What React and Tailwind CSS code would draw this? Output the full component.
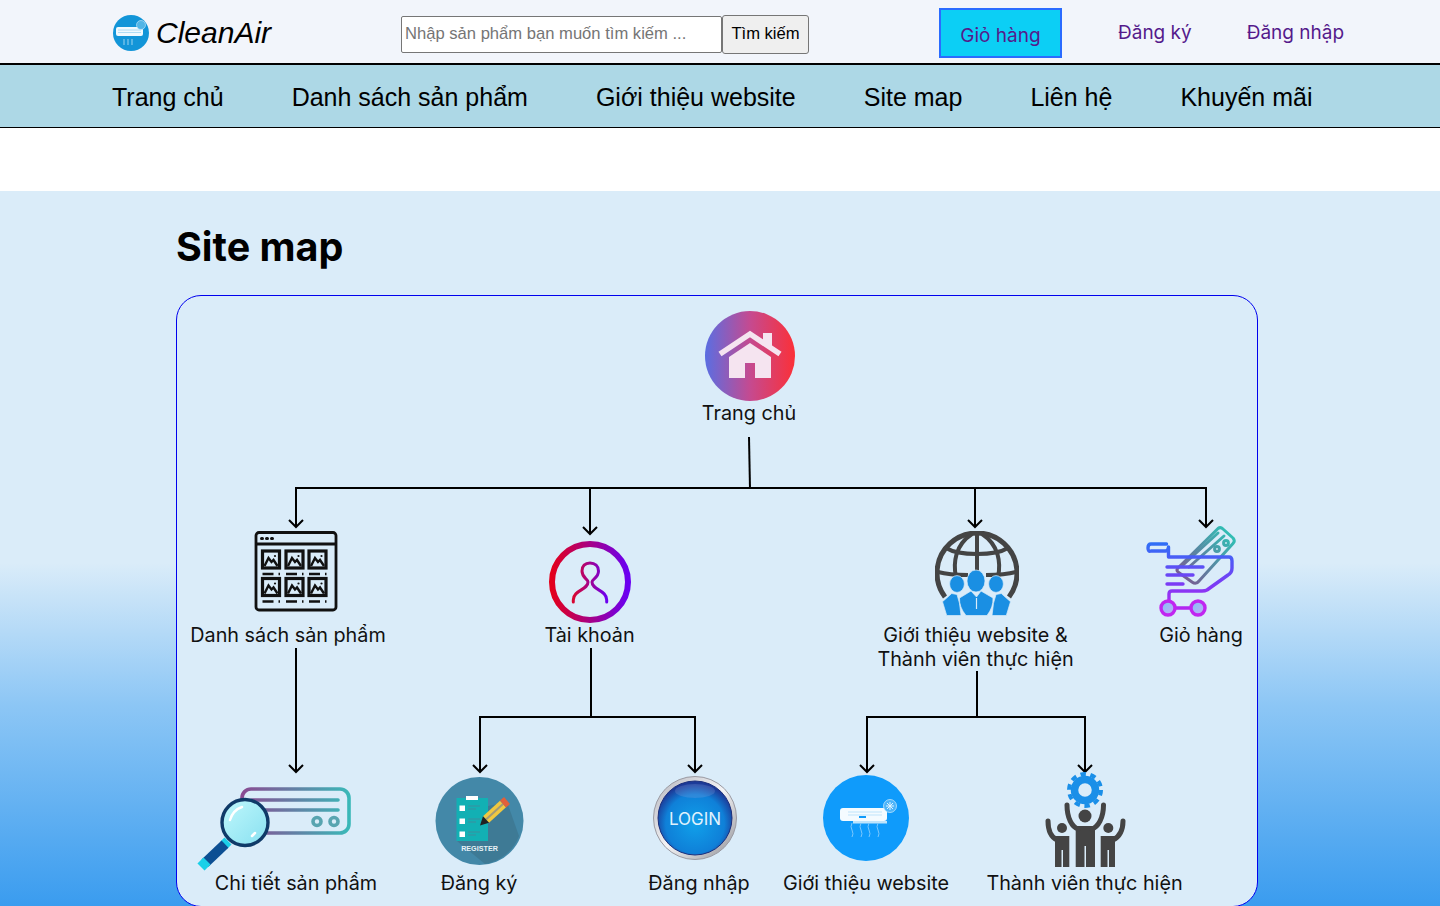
import React from 'react';

const inter = 'font-["Inter","Liberation_Sans",sans-serif]';

function Arrow({ x, y }) {
  return <path d={`M${x - 7} ${y - 7} L${x} ${y} L${x + 7} ${y - 7}`} />;
}

function Connectors() {
  return (
    <svg viewBox="176 295 1082 611" width="1082" height="611" className="absolute left-[-1px] top-[-1px]" fill="none" stroke="#000" strokeWidth="2">
      <path d="M749 437 L750 489" />
      <path d="M296 526 V488 H1206 V526" />
      <path d="M590 488 V533" />
      <path d="M975 488 V526" />
      <Arrow x={296} y={527} />
      <Arrow x={590} y={534} />
      <Arrow x={975} y={527} />
      <Arrow x={1206} y={527} />
      <path d="M296 648 V771" />
      <Arrow x={296} y={772} />
      <path d="M591 648 V717" />
      <path d="M480 771 V717 H695 V771" />
      <Arrow x={480} y={772} />
      <Arrow x={695} y={772} />
      <path d="M977 671 V717" />
      <path d="M867 771 V717 H1085 V771" />
      <Arrow x={867} y={772} />
      <Arrow x={1085} y={772} />
    </svg>
  );
}

function HomeIcon() {
  return (
    <svg width="90" height="90" viewBox="0 0 90 90">
      <defs>
        <linearGradient id="homeG" x1="0" x2="1" y1="0" y2="0">
          <stop offset="0" stopColor="#5a6ee2" />
          <stop offset="0.5" stopColor="#c54a90" />
          <stop offset="1" stopColor="#fb3038" />
        </linearGradient>
      </defs>
      <circle cx="45" cy="45" r="45" fill="url(#homeG)" />
      <path d="M58 22 H67 V36 L58 30 Z" fill="#f5e4f0" />
      <path d="M15 43 L45 23 L75 43" fill="none" stroke="#f5e4f0" strokeWidth="5.5" strokeLinejoin="miter" />
      <path d="M24 46 L45 32 L66 46 V67 H50 V52 H40 V67 H24 Z" fill="#f5e4f0" />
    </svg>
  );
}

function ListIcon() {
  const xs = [8.5, 32, 55];
  const ys = [20, 47.5];
  return (
    <svg width="84" height="81" viewBox="0 0 84 81" fill="none" stroke="#111" strokeWidth="2.8">
      <rect x="2" y="1.5" width="80" height="77.5" rx="3" />
      <path d="M2 13 H82" />
      <path d="M7.5 7.5 h1 M12.5 7.5 h1 M17.5 7.5 h1" strokeWidth="3" strokeLinecap="round" />
      {ys.map(y =>
        xs.map(x => (
          <g key={`${x}-${y}`}>
            <rect x={x} y={y} width="17" height="17" strokeWidth="3.2" />
            <path d={`M${x + 2} ${y + 15} L${x + 6} ${y + 7} L${x + 9} ${y + 11} L${x + 11} ${y + 9} L${x + 15} ${y + 15}`} strokeWidth="2.4" />
            <circle cx={x + 12.5} cy={y + 5} r="1.1" fill="#111" stroke="none" />
            <path d={`M${x} ${y + 23} h11 M${x + 16} ${y + 23} h1.5`} strokeWidth="2.4" />
          </g>
        ))
      )}
    </svg>
  );
}

function UserIcon() {
  return (
    <svg width="84" height="84" viewBox="0 0 84 84" fill="none" strokeLinecap="round">
      <defs>
        <linearGradient id="userG" x1="0" x2="1" y1="0" y2="0">
          <stop offset="0" stopColor="#e3001b" />
          <stop offset="1" stopColor="#6a00f2" />
        </linearGradient>
        <linearGradient id="userG2" gradientUnits="userSpaceOnUse" x1="25" x2="59" y1="0" y2="0">
          <stop offset="0" stopColor="#d9062e" />
          <stop offset="1" stopColor="#6a00f2" />
        </linearGradient>
      </defs>
      <circle cx="42" cy="42" r="38" stroke="url(#userG)" strokeWidth="6" />
      <path d="M25.3 62 V60 C25.3 50 40 50 40 42 C40 39 34 38 34 31 C34 26 37 23 42 23 C47 23 50.5 26 50.5 31 C50.5 38 44 39 44 42 C44 50 58.7 50 58.7 60 V62" stroke="url(#userG2)" strokeWidth="3" />
    </svg>
  );
}

function GlobeIcon() {
  return (
    <svg width="84" height="86" viewBox="0 0 84 86" fill="none">
      <g stroke="#444" strokeWidth="4">
        <path d="M10 66 A40 40 0 1 1 74 66" strokeWidth="5" />
        <path d="M42 2 V42" />
        <path d="M37 3 C20 14 18 32 21 46" />
        <path d="M47 3 C64 14 66 32 63 46" />
        <path d="M11 17 C24 25 60 25 73 17" />
        <path d="M3 41 C14 44 26 44 33 44 M51 44 C58 44 70 44 81 41" />
      </g>
      <g fill="#1a8fe3" stroke="#daecf9" strokeWidth="0.7">
        <ellipse cx="41" cy="50" rx="9" ry="11" />
        <ellipse cx="22" cy="53" rx="7.4" ry="8.4" />
        <ellipse cx="61" cy="53" rx="7.4" ry="8.4" />
        <path d="M16.7 62.5 L22 63.5 L24.5 72.3 L26 84.5 H11.7 L7.5 70.7 Z" />
        <path d="M66.3 62.5 L61 63.5 L58.5 72.3 L57 84.5 H71.3 L75.5 70.7 Z" />
        <path d="M36 60 L24.5 67 Q24 76 31 84.5 H52 Q58.5 76 58 67 L46 60 L41.5 66 Z" />
      </g>
      <path d="M41.5 67 V78" stroke="#daecf9" strokeWidth="1.2" />
    </svg>
  );
}

function CartIcon() {
  return (
    <svg width="92" height="92" viewBox="0 0 92 92" fill="none" strokeLinecap="round" strokeLinejoin="round">
      <defs>
        <linearGradient id="cartG" gradientUnits="userSpaceOnUse" x1="0" x2="0" y1="18" y2="92">
          <stop offset="0" stopColor="#2f6ff6" />
          <stop offset="0.55" stopColor="#7a3cf5" />
          <stop offset="1" stopColor="#c81ff0" />
        </linearGradient>
        <linearGradient id="cardG" gradientUnits="userSpaceOnUse" x1="35" x2="90" y1="62" y2="12">
          <stop offset="0" stopColor="#80508f" />
          <stop offset="1" stopColor="#2fc0b5" />
        </linearGradient>
        <linearGradient id="wheelG" x1="0" x2="1" y1="0" y2="1">
          <stop offset="0" stopColor="#7cc4f5" />
          <stop offset="1" stopColor="#c8a8f8" />
        </linearGradient>
      </defs>
      <g stroke="url(#cardG)" strokeWidth="3">
        <path d="M33 43 L73 3.5 Q75.5 1.5 78 4 L88 13 Q90.5 16 88 18.5 L54 56 Q51 60 47 57 L33 47 Q31 45 33 43 Z" />
        <path d="M38 40 L73 8 M44 42 L79 11" />
        <circle cx="72" cy="24" r="2.4" />
        <circle cx="81" cy="18" r="2.4" />
      </g>
      <g stroke="url(#cartG)" strokeWidth="3.4">
        <path d="M21.5 19 H6 Q3 19 3 23 Q3 27 6 26 H21 Q23.5 25 23.5 22 V32 H84 Q87 32 87 36 V43 Q87 48 83 50 L62 65 Q60 66 57 66 H27 Q24 66 24 69 V76" />
        <path d="M22 42 H58 M22 50 H48 M22 59 H38" />
        <path d="M30 83 H46" />
      </g>
      <circle cx="23" cy="83" r="7" fill="url(#wheelG)" stroke="#c026f0" strokeWidth="3.4" />
      <circle cx="53" cy="83" r="7" fill="url(#wheelG)" stroke="#c026f0" strokeWidth="3.4" />
    </svg>
  );
}

function SearchIcon() {
  return (
    <svg width="160" height="92" viewBox="0 0 160 92" fill="none" strokeLinecap="round">
      <defs>
        <linearGradient id="acG" gradientUnits="userSpaceOnUse" x1="47" x2="154" y1="0" y2="0">
          <stop offset="0" stopColor="#8a4a92" />
          <stop offset="1" stopColor="#3ab8b8" />
        </linearGradient>
        <linearGradient id="lensG" x1="0" x2="1" y1="0" y2="1">
          <stop offset="0" stopColor="#c0f8fc" />
          <stop offset="1" stopColor="#88e0f0" />
        </linearGradient>
      </defs>
      <rect x="47" y="9" width="107" height="44" rx="9" stroke="url(#acG)" strokeWidth="3.6" />
      <path d="M57 20 H143 M57 30 H143" stroke="url(#acG)" strokeWidth="3.6" />
      <circle cx="122" cy="41.5" r="4" stroke="#58a4b0" strokeWidth="3.6" />
      <circle cx="139" cy="41.5" r="4" stroke="#58a4b0" strokeWidth="3.6" />
      <path d="M33 61 L29 65" stroke="#1ad0e8" strokeWidth="10" strokeLinecap="butt" />
      <path d="M30 64 L10 83" stroke="#0c4f93" strokeWidth="10" strokeLinecap="butt" />
      <path d="M12 81 L6 87" stroke="#1ad0e8" strokeWidth="10" strokeLinecap="butt" />
      <circle cx="50" cy="42.5" r="23" fill="url(#lensG)" stroke="#0f3a68" strokeWidth="3.4" />
      <path d="M35 40 Q38 30 47 27" stroke="#fff" strokeWidth="2.5" />
      <path d="M57 56 L60 53" stroke="#fff" strokeWidth="2.5" />
    </svg>
  );
}

function RegisterIcon() {
  return (
    <svg width="90" height="90" viewBox="0 0 90 90">
      <circle cx="44.5" cy="45" r="44" fill="#4388a8" />
      <path d="M53 30 L72 26 L84 60 A44 44 0 0 1 50 88 L22 65 Z" fill="#3e7a95" />
      <rect x="21.5" y="22" width="31.5" height="43" fill="#12b0b4" />
      <rect x="31" y="20" width="12" height="4" fill="#fff" />
      {[32, 45, 58].map(y => (
        <g key={y}>
          <rect x="24.5" y={y - 2.5} width="5.5" height="5.5" fill="#fff" />
          <path d={`M33 ${y - 2} h12 M33 ${y + 1} h8`} stroke="#3d8e9e" strokeWidth="1" />
        </g>
      ))}
      <path d="M51 43.5 L68 28" stroke="#f0c840" strokeWidth="9" />
      <path d="M51 43.5 L68 28" stroke="#a09a78" strokeWidth="2" />
      <path d="M68 28 L72 24.5" stroke="#e2603a" strokeWidth="9" />
      <path d="M45 49.5 L48 40.2 L54 46.8 Z" fill="#222" />
      <text x="44.5" y="74.5" textAnchor="middle" fill="#e8f2f6" fontSize="7.2" fontWeight="700" fontFamily="Liberation Sans, sans-serif">REGISTER</text>
    </svg>
  );
}

function LoginIcon() {
  return (
    <svg width="86" height="86" viewBox="0 0 86 86">
      <defs>
        <linearGradient id="rimG" x1="0" x2="1" y1="0" y2="1">
          <stop offset="0" stopColor="#b4b4bc" />
          <stop offset="0.5" stopColor="#f4f4f6" />
          <stop offset="1" stopColor="#8e8e94" />
        </linearGradient>
        <radialGradient id="ballG" cx="0.5" cy="0.58" r="0.55">
          <stop offset="0" stopColor="#10a0ea" />
          <stop offset="0.72" stopColor="#0f80d8" />
          <stop offset="1" stopColor="#1c3a98" />
        </radialGradient>
      </defs>
      <circle cx="43" cy="43" r="41.5" fill="url(#rimG)" stroke="#9a9aa2" strokeWidth="1" />
      <circle cx="43" cy="43" r="37" fill="url(#ballG)" stroke="#1b2f7c" strokeWidth="1" />
      <ellipse cx="43" cy="16" rx="20" ry="7" fill="#a8a8e0" opacity="0.2" />
      <text x="43" y="50" textAnchor="middle" fill="#e0f2fd" fontSize="17" fontFamily="Inter, sans-serif">LOGIN</text>
    </svg>
  );
}

function AcIcon() {
  return (
    <svg width="86" height="86" viewBox="0 0 86 86" fill="none">
      <circle cx="43" cy="43" r="43" fill="#0f9bfb" />
      <rect x="17" y="33" width="47" height="13" rx="3" fill="#f4fbff" />
      <path d="M25 37 h34 M25 40 h34" stroke="#bfe4fb" strokeWidth="1" />
      <rect x="36" y="41" width="7" height="2" fill="#0f9bfb" />
      <path d="M30 46 h34 v2.5 h-34 z" fill="#bfe4fb" />
      <circle cx="67" cy="31" r="6.5" fill="#4db4f9" stroke="#bfe4fb" strokeWidth="0.8" />
      <path d="M67 27 v8 M63 31 h8 M64 28 l6 6 M70 28 l-6 6" stroke="#e0f3ff" strokeWidth="1" />
      {[29, 38, 46, 55].map(x => (
        <path key={x} d={`M${x} 48 q-2 4 0 7 q2 4 0 7`} stroke="#7cc8fb" strokeWidth="1" />
      ))}
    </svg>
  );
}

function TeamIcon() {
  return (
    <svg width="90" height="100" viewBox="0 0 90 100" fill="none" strokeLinecap="round">
      <circle cx="45" cy="20" r="10.5" stroke="#1a8fe8" strokeWidth="7.5" />
      <circle cx="45" cy="20" r="16" stroke="#1a8fe8" strokeWidth="4" strokeDasharray="5.5 4.55" strokeLinecap="butt" />
      <g fill="#444">
        <circle cx="45" cy="46" r="6.5" />
        <circle cx="22" cy="58" r="5" />
        <circle cx="68.3" cy="58" r="5" />
        <path d="M35.7 56 H55 V97 H46 V76 H44.5 V97 H35.7 Z" />
        <path d="M15 66 H29.3 V97 H23 V80 H21.5 V97 H15 Z" />
        <path d="M60.7 66 H75 V97 H69 V80 H67.5 V97 H60.7 Z" />
      </g>
      <g stroke="#444" strokeWidth="5">
        <path d="M27 35 C27 48 32 57 38 59" />
        <path d="M63.5 35 C63.5 48 58 57 52 59" />
        <path d="M8 51 C8 60 11 67 17 70" />
        <path d="M83 51 C83 60 79 67 73 70" />
      </g>
    </svg>
  );
}

function Logo() {
  return (
    <svg width="36" height="38" viewBox="0 0 36 38" fill="none">
      <circle cx="18" cy="19" r="18" fill="#1295d8" />
      <rect x="3" y="13" width="27" height="9" rx="2" fill="#f0f9fe" />
      <path d="M5 16 h23 M5 18.5 h23" stroke="#9fd6f2" strokeWidth="0.8" />
      <circle cx="28" cy="11" r="4.5" fill="#52b5e6" stroke="#cdeafa" strokeWidth="0.6" />
      <path d="M11 25 v6 M15 25 v6 M19 25 v6" stroke="#bfe4f7" strokeWidth="0.8" />
    </svg>
  );
}

export default function App() {
  const navClass = 'text-black text-[25px] leading-none';
  const labelClass = 'absolute -translate-x-1/2 text-center text-[19.8px] leading-[24px] text-[#111] whitespace-nowrap';
  return (
    <div className={`h-[906px] overflow-hidden bg-white ${inter}`}>
      <header className="h-[65px] bg-[#f2f5fb] border-b-2 border-black flex items-center pl-[113px]">
        <div className="w-[288px] flex items-center gap-[7px] mt-[2px]">
          <Logo />
          <span className="font-['Liberation_Sans',sans-serif] italic text-[30px] leading-none text-black">CleanAir</span>
        </div>
        <div className="w-[538px] flex items-center mt-[6px] font-['Liberation_Sans',sans-serif]">
          <input placeholder="Nhập sản phẩm bạn muốn tìm kiếm ..." className="w-[321px] h-[37px] bg-white border border-[#767676] rounded-[2px] px-[3px] pb-[2px] text-[16.6px] text-black placeholder:text-[#757575] outline-none" />
          <button className="w-[87px] h-[39px] bg-[#efefef] border border-[#767676] rounded-[3px] text-[16.6px] text-black">Tìm kiếm</button>
        </div>
        <a className="w-[123px] h-[50px] pt-[7px] bg-[#0ccff5] border-2 border-[#2a6bff] flex items-center justify-center text-[19px] text-[#551a8b] mt-[2px]">Giỏ hàng</a>
        <a className="ml-[56px] mt-[4px] text-[19px] text-[#551a8b]">Đăng ký</a>
        <a className="ml-[55px] mt-[4px] text-[19px] text-[#551a8b]">Đăng nhập</a>
      </header>
      <nav className="h-[63px] pt-[2px] bg-[#add8e6] border-b border-black flex items-center gap-[68px] pl-[112px] font-['Liberation_Sans',sans-serif]">
        <a className={navClass}>Trang chủ</a>
        <a className={navClass}>Danh sách sản phẩm</a>
        <a className={navClass}>Giới thiệu website</a>
        <a className={navClass}>Site map</a>
        <a className={navClass}>Liên hệ</a>
        <a className={navClass}>Khuyến mãi</a>
      </nav>
      <div className="h-[63px]" />
      <main className="h-[715px] px-[176px] pt-[33px] bg-[linear-gradient(#daecf9_0%,#daecf9_52%,#8cc6f5_72%,#3a9cef_100%)]">
        <h1 className="text-[39.5px] leading-[46px] font-bold text-black">Site map</h1>
        <div className="relative mt-[25px] w-[1082px] h-[612px] bg-[#daecf9] border border-[#0000ee] rounded-[25px]">
          <Connectors />

          <div className="absolute left-[77px] top-[235px]"><ListIcon /></div>
          <span className={`${labelClass} left-[111px] top-[327px]`}>Danh sách sản phẩm</span>

          <div className="absolute left-[528px] top-[15px]"><HomeIcon /></div>
          <span className={`${labelClass} left-[572px] top-[105px]`}>Trang chủ</span>

          <div className="absolute left-[371px] top-[244px]"><UserIcon /></div>
          <span className={`${labelClass} left-[412.5px] top-[327px]`}>Tài khoản</span>

          <div className="absolute left-[758px] top-[235px]"><GlobeIcon /></div>
          <span className={`${labelClass} left-[798.5px] top-[327px]`}>Giới thiệu website &amp;<br />Thành viên thực hiện</span>

          <div className="absolute left-[968px] top-[229px]"><CartIcon /></div>
          <span className={`${labelClass} left-[1024px] top-[327px]`}>Giỏ hàng</span>

          <div className="absolute left-[18px] top-[484px]"><SearchIcon /></div>
          <span className={`${labelClass} left-[119px] top-[575px]`}>Chi tiết sản phẩm</span>

          <div className="absolute left-[258px] top-[480px]"><RegisterIcon /></div>
          <span className={`${labelClass} left-[302px] top-[575px]`}>Đăng ký</span>

          <div className="absolute left-[475px] top-[479px]"><LoginIcon /></div>
          <span className={`${labelClass} left-[522px] top-[575px]`}>Đăng nhập</span>

          <div className="absolute left-[646px] top-[479px]"><AcIcon /></div>
          <span className={`${labelClass} left-[689px] top-[575px]`}>Giới thiệu website</span>

          <div className="absolute left-[863px] top-[474px]"><TeamIcon /></div>
          <span className={`${labelClass} left-[907.5px] top-[575px]`}>Thành viên thực hiện</span>
        </div>
      </main>
    </div>
  );
}
